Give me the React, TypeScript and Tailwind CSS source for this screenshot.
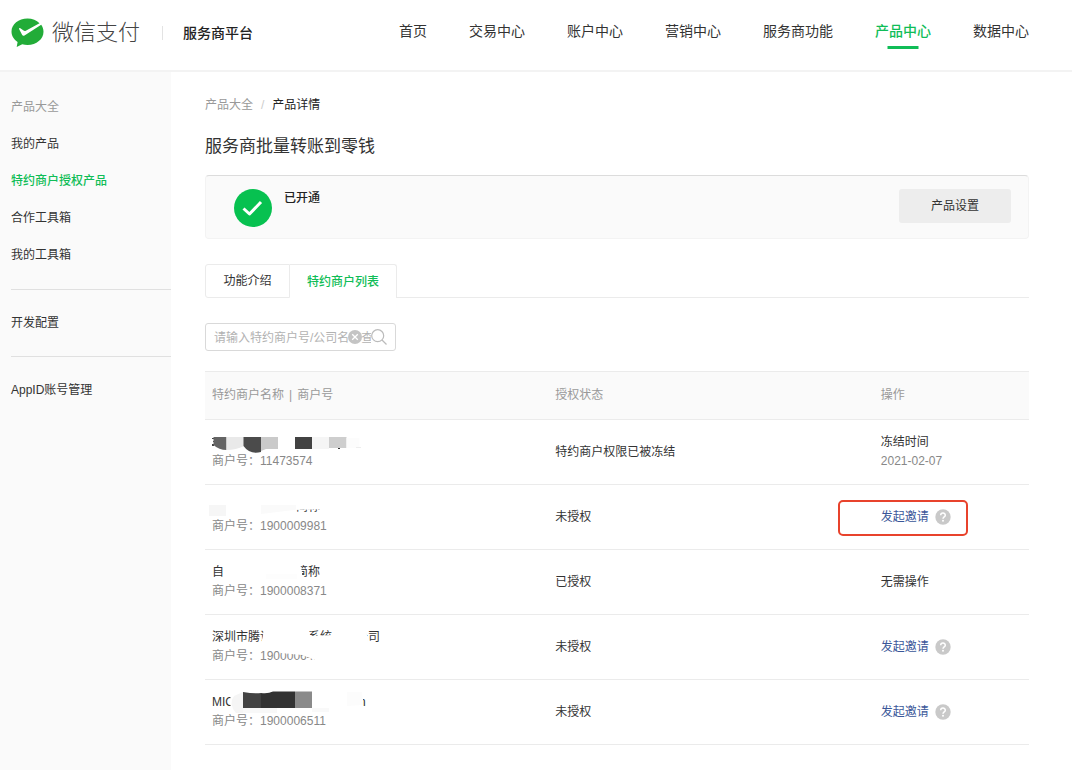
import React from "react";
import { clsx } from "clsx";

const navItems = ["首页", "交易中心", "账户中心", "营销中心", "服务商功能", "产品中心", "数据中心"];

const productLinks = ["我的产品", "特约商户授权产品", "合作工具箱", "我的工具箱"];

// one drawing per row, laid over the two text lines of the name cell
const masks = {
  first: (
    <>
      <path d="M0 5h3v1H0zM1 8h2v1H1zM0 11h2v2H0z" fill="#444" />
      <path d="M1.500 4H14.500V17Q7 17 1.500 12Z" fill="#646464" />
      <path d="M14.500 4H32V13Q24 17 14.500 17Z" fill="#e9e9e9" />
      <path d="M31.500 4H49V19Q38 22 31.500 13Z" fill="#4b4b4b" />
      <path d="M49 4H66V16H54L49 18Z" fill="#cacaca" />
      <rect x="83" y="4" width="17" height="12" fill="#424242" />
      <rect x="100" y="4" width="17" height="12" fill="#f5f5f5" />
      <rect x="117" y="4" width="17.500" height="11" fill="#cecece" />
      <rect x="126" y="15" width="2" height="1" fill="#333" />
      <path d="M134.500 5h13v10h-13z" fill="#fcfcfc" />
      <path d="M144 14h5v1h-5z" fill="#ededed" />
    </>
  ),
  second: (
    <>
      <path d="M46 0H116V11L82 12H46Z" fill="#fff" />
      <rect x="-3" y="7" width="17" height="11" fill="#f6f6f6" />
      <path d="M49 7H100L82 12L49 16Z" fill="#fafafa" />
      <path d="M84 0H112V11H84Z" fill="#fff" />
    </>
  ),
  third: (
    <>
      <path d="M13 0H88L90 9V19H13Z" fill="#fff" />
      <path d="M54 11H85V16H54Z" fill="#fdfdfd" />
    </>
  ),
  fourth: (
    <>
      <path d="M52 0L51 8L48 19H62L69 25L90 27L103 32H116V22H156V14L154 0H121L120 7L98 8L96 0Z" fill="#fff" />
    </>
  ),
  fifth: (
    <>
      <path d="M20 0H151V17H32L20 17Q16 8 20 0Z" fill="#fff" />
      <path d="M31 -1V20H24Q16 11 22 3Z" fill="#f5f5f5" />
      <path d="M31 15H65V20H31Z" fill="#f8f8f8" />
      <path d="M31 -1Q42 1 49 0V15H31Z" fill="#424242" />
      <path d="M49 0Q56 1 61 -1.500H83V15H49Z" fill="#333" />
      <rect x="83" y="-1.500" width="17" height="16.500" fill="#8a8a8a" />
      <rect x="100" y="15" width="17" height="4" fill="#f9f9f9" />
      <path d="M135 -1H150L151 12L135 13Z" fill="#fcfcfc" />
    </>
  ),
};

const rows = [
  { name: null, no: "11473574", status: "特约商户权限已被冻结", action: "frozen", mask: masks.first },
  { name: <span className="ml-21">简称</span>, no: "1900009981", status: "未授权", action: "invite", marked: true, mask: masks.second },
  { name: <><span>自</span><span className="ml-18">简称</span></>, no: "1900008371", status: "已授权", action: "none", mask: masks.third },
  {
    name: <><span>深圳市腾讯</span><span className="ml-9">系统</span><span className="ml-6">公司</span></>,
    no: "1900006411", status: "未授权", action: "invite", mask: masks.fourth,
  },
  { name: <><span className="w-[147px]">MIC</span><span>n</span></>, no: "1900006511", status: "未授权", action: "invite", mask: masks.fifth },
];

const Header = () => (
  <header className="flex h-[72px] items-center justify-between border-b-2 border-[#f3f3f3] pl-[11px] pr-[43px]">
    <div className="flex items-center pb-1">
      <a href="#" className="flex items-center gap-2 text-[22px] leading-8 font-light text-[#444]">
        <svg width="33" height="30" viewBox="0 0 33 30" aria-hidden="true">
          <path d="M16.500 .5C7.500 .5 .5 6.300 .5 13.500C.5 18 3 21.500 6.600 24L5.700 29L11.200 26.200C13 26.700 14.700 26.900 16.500 26.900C25.500 26.900 32.500 21 32.500 13.700C32.500 11 31.600 8.800 30.200 6.800L13.500 17.500C12.500 18 11.700 17.900 11.200 17L8.200 11.200C7.800 10.200 8.600 9.800 9.300 10.300L12.600 12.600C13.300 13 14 13 14.800 12.700L28.500 5.200C25.600 2.300 21.300 .5 16.500 .5Z" fill="#22ac38" />
        </svg>
        微信支付
      </a>
      <span className="ml-[22px] mr-5 h-[14px] w-px bg-[#e3e3e3]" />
      <span className="text-sm font-medium text-[#222]">服务商平台</span>
    </div>
    <nav className="flex gap-[42px] text-sm">
      {navItems.map((item) => (
        <a
          key={item}
          href="#"
          className={clsx("relative whitespace-nowrap pb-2", item === "产品中心" && "font-medium text-[#10bd57]")}
        >
          {item}
          {item === "产品中心" && <span className="absolute bottom-0 left-1/2 h-[3px] w-[31px] -translate-x-1/2 bg-[#10bd57]" />}
        </a>
      ))}
    </nav>
  </header>
);

const Sidebar = () => (
  <aside className="w-[171px] shrink-0 bg-[#fafafa] pl-[11px] pt-[17px]">
    <div className="flex h-[37px] items-center text-[#999]">产品大全</div>
    <ul className="border-b border-[#e0e0e0] pb-[15px]">
      {productLinks.map((item) => (
        <li key={item}>
          <a
            href="#"
            className={clsx("flex h-[37px] items-center", item === "特约商户授权产品" && "font-medium text-[#10bd57]")}
          >
            {item}
          </a>
        </li>
      ))}
    </ul>
    <a href="#" className="flex h-[67px] items-center border-b border-[#e0e0e0]">开发配置</a>
    <a href="#" className="flex h-[67px] items-center">AppID账号管理</a>
  </aside>
);

const HelpIcon = () => (
  <svg width="16" height="16" viewBox="0 0 16 16" aria-hidden="true">
    <circle cx="8" cy="8" r="7.700" fill="#c9c9c9" />
    <path d="M5.700 6.300C5.700 3.400 10.300 3.400 10.300 6.200C10.300 7.900 8 7.900 8 9.700" fill="none" stroke="#fff" strokeWidth="1.500" />
    <circle cx="8" cy="11.700" r="1" fill="#fff" />
  </svg>
);

const Action = ({ action, marked }: { action: string; marked?: boolean }) => {
  if (action === "frozen") {
    return (
      <>
        <div>冻结时间</div>
        <div className="text-[#888]">2021-02-07</div>
      </>
    );
  }
  if (action === "none") return <>无需操作</>;
  return (
    <div className="relative flex items-center gap-[6px]">
      <a href="#" className="text-[#3a5799]">发起邀请</a>
      <HelpIcon />
      {marked && <span className="absolute -left-[43px] -top-2 h-9 w-[130px] rounded-[5px] border-2 border-[#e8432c]" />}
    </div>
  );
};

const MerchantTable = () => (
  <table className="mt-5 w-full table-fixed border-collapse text-left">
    <thead>
      <tr className="h-12 border-y border-[#ebebeb] bg-[#fafafa] text-[#999]">
        <th className="w-5/12 px-[7px] font-normal">特约商户名称<span className="mx-[5px]">|</span>商户号</th>
        <th className="w-[39.5%] px-[7px] font-normal">授权状态</th>
        <th className="px-[7px] font-normal">操作</th>
      </tr>
    </thead>
    <tbody>
      {rows.map((row) => (
        <tr key={row.no} className="h-[65px] border-b border-[#ebebeb]">
          <td className="px-[7px]">
            <div className="relative">
              <div className="flex h-[19px]">{row.name}</div>
              <div className="text-[#888]">商户号：{row.no}</div>
              <svg className="absolute left-0 top-0 overflow-visible" width="180" height="38" viewBox="0 0 180 38" aria-hidden="true">
                {row.mask}
              </svg>
            </div>
          </td>
          <td className="px-[7px]">{row.status}</td>
          <td className="px-[7px]">
            <Action action={row.action} marked={row.marked} />
          </td>
        </tr>
      ))}
    </tbody>
  </table>
);

export default function App() {
  return (
    <div className="flex min-h-screen flex-col bg-white font-['Liberation_Sans','Noto_Sans_CJK_SC',sans-serif] text-xs leading-[19px] text-[#333]">
      <Header />
      <div className="flex flex-1">
        <Sidebar />
        <main className="min-w-0 flex-1 pl-[34px] pr-[43px] pt-6">
          <div className="flex gap-2">
            <a href="#" className="text-[#999]">产品大全</a>
            <span className="text-[#ccc]">/</span>
            <span className="text-[#222]">产品详情</span>
          </div>
          <h1 className="mt-5 text-[17px] leading-6">服务商批量转账到零钱</h1>

          <section className="mt-4 flex h-16 items-start rounded-sm border border-[#f3f3f3] border-t-[#dcdcdc] bg-[#fafafa] pl-7 pr-[17px] pt-[13px]">
            <svg width="38" height="38" viewBox="0 0 38 38" aria-hidden="true">
              <circle cx="19" cy="19" r="19" fill="#07c150" />
              <path d="M9.500 19.500L15.500 25L27 13" fill="none" stroke="#fff" strokeWidth="3" strokeLinejoin="round" />
            </svg>
            <strong className="ml-3 font-medium text-[#222]">已开通</strong>
            <button type="button" className="ml-auto h-[34px] w-28 rounded-[3px] bg-[#ededed]">产品设置</button>
          </section>

          <div className="mt-[25px] flex" role="tablist">
            <button type="button" role="tab" className="h-[34px] w-[85px] rounded-l-[3px] border border-[#ebebeb] pt-px">功能介绍</button>
            <button
              type="button"
              role="tab"
              aria-selected="true"
              className="h-[34px] w-[107px] rounded-tr-[3px] border-r border-t border-[#ebebeb] pt-px font-medium text-[#10bd57]"
            >
              特约商户列表
            </button>
            <span className="flex-1 border-b border-[#ebebeb]" />
          </div>

          <div className="relative mt-[25px] h-7 w-[191px]">
            <input
              type="text"
              aria-label="请输入特约商户号/公司名称查询"
              placeholder="请输入特约商户号/公司名称查询"
              className="h-7 w-full rounded-[3px] border border-[#d9d9d9] pl-2 pr-6 pt-px placeholder:text-[#b2b2b2]"
            />
            <button type="button" aria-label="清除" className="absolute right-[34px] top-[7px]">
              <svg width="14" height="14" viewBox="0 0 14 14">
                <circle cx="7" cy="7" r="7" fill="#c4c4c4" />
                <path d="M4.200 4.200L9.800 9.800M9.800 4.200L4.200 9.800" stroke="#fff" strokeWidth="1.300" />
              </svg>
            </button>
            <button type="button" aria-label="搜索" className="absolute right-[9px] top-[6px]">
              <svg width="16" height="16" viewBox="0 0 16 16" fill="none" stroke="#bbb" strokeWidth="1.200">
                <circle cx="6.700" cy="6.700" r="6" />
                <path d="M11 11L15.500 15.500" />
              </svg>
            </button>
          </div>

          <MerchantTable />
        </main>
      </div>
    </div>
  );
}
